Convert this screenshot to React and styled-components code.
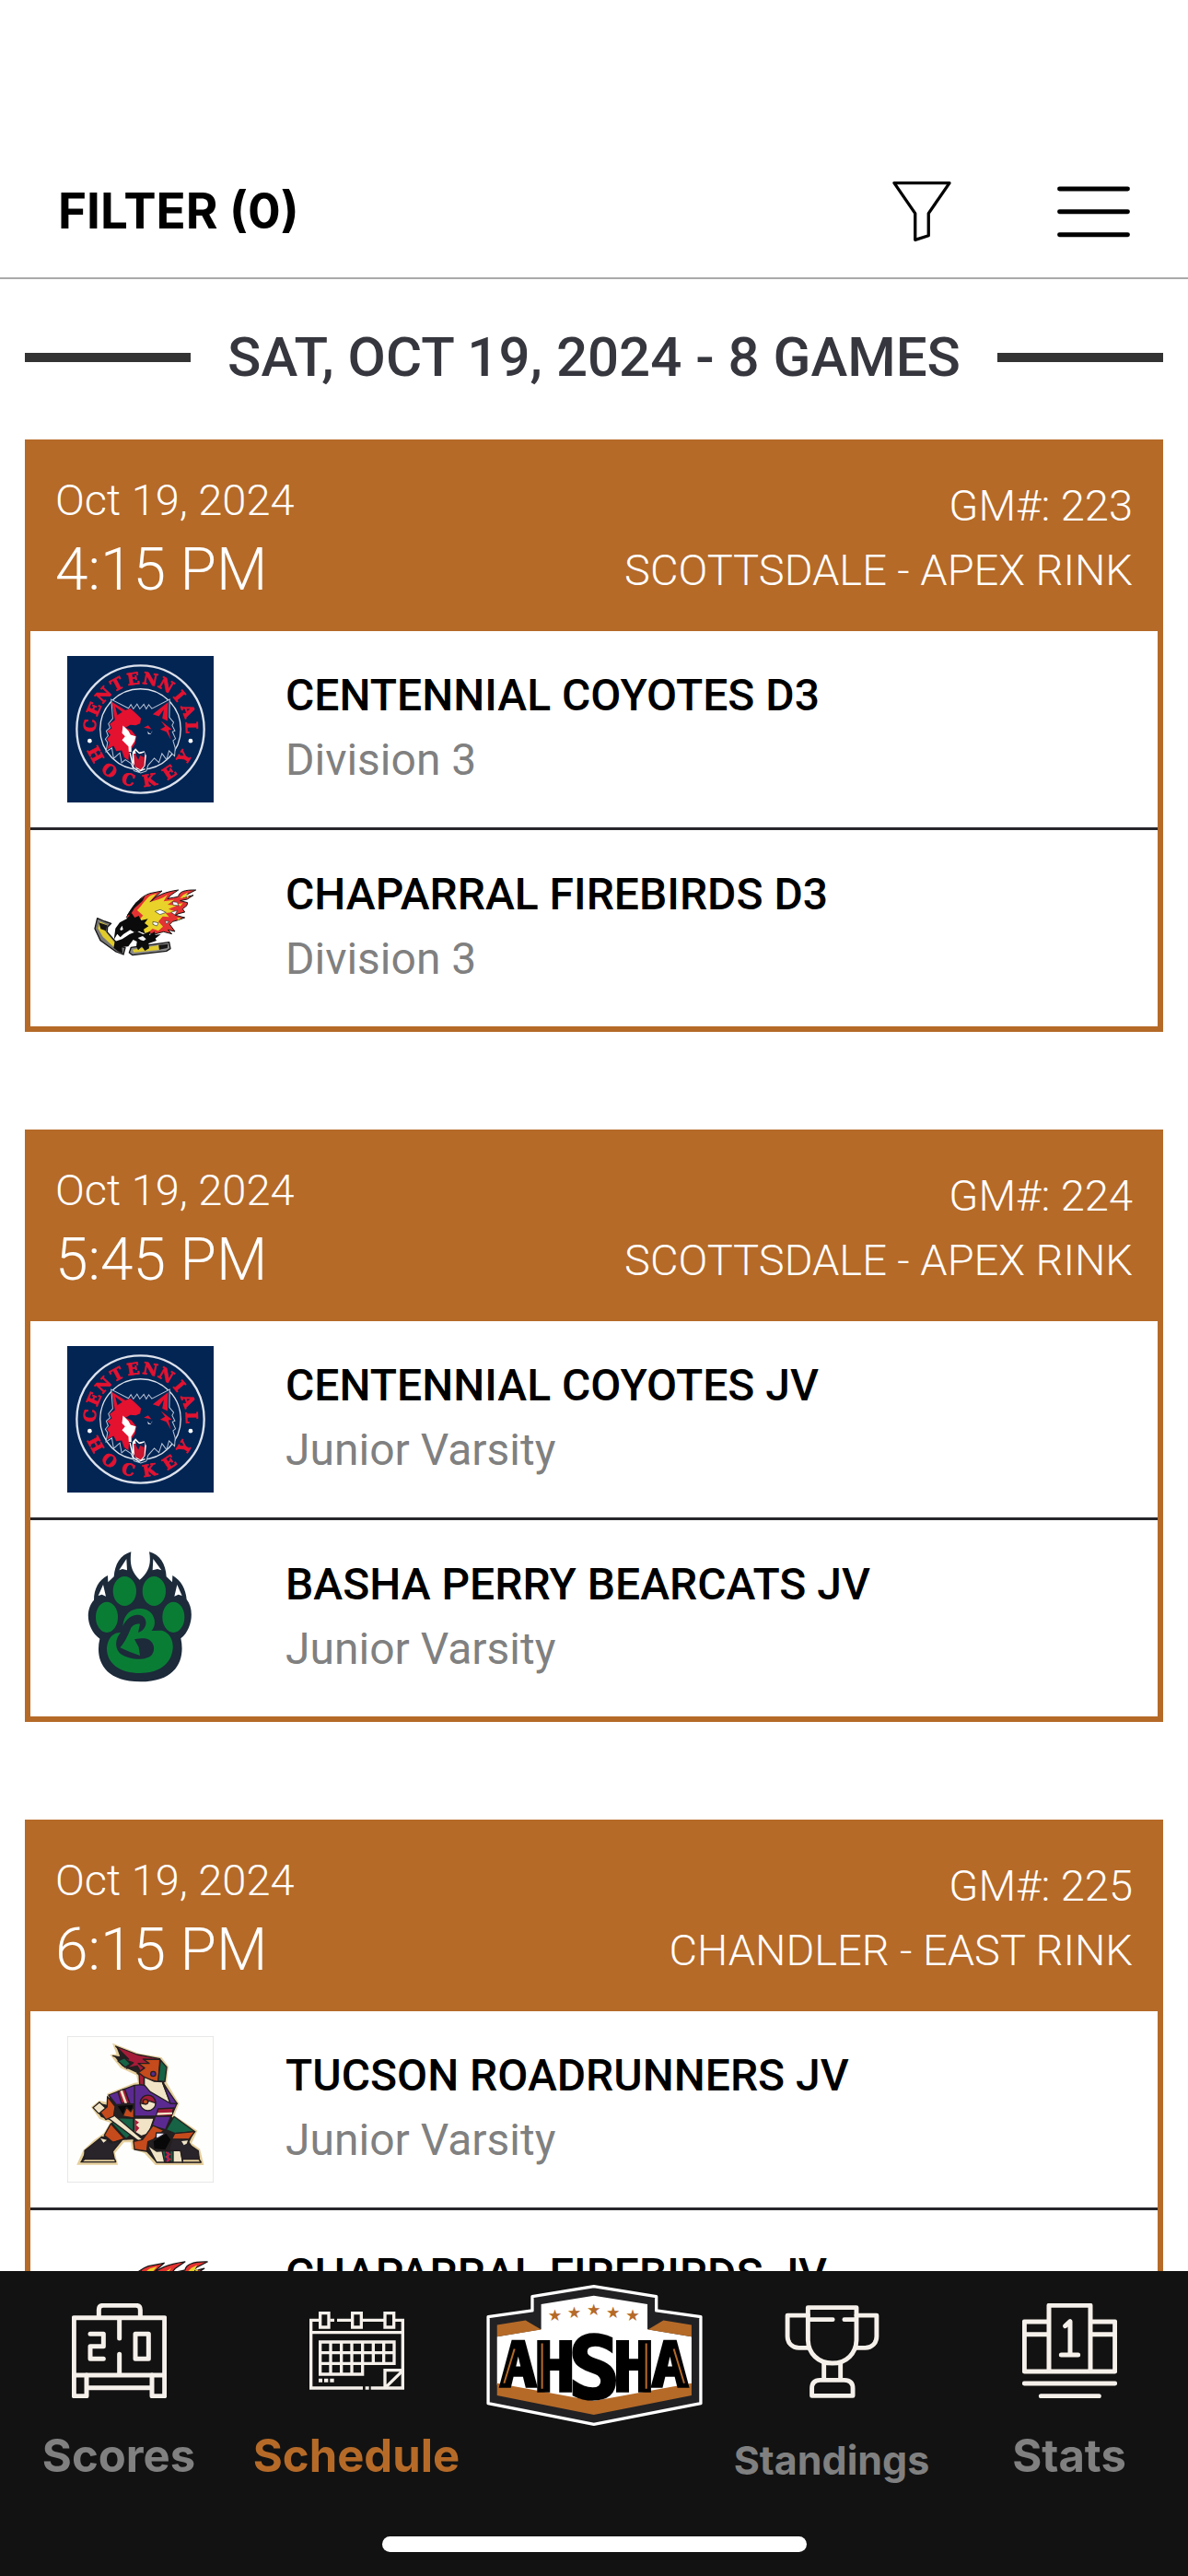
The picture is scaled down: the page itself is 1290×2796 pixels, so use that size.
import React from "react";
import styled, { createGlobalStyle } from "styled-components";

const orange = "#b56a28";
const cream = "#f5f0ea";

const games = [
  {
    id: 223,
    date: "Oct 19, 2024",
    time: "4:15 PM",
    rink: "SCOTTSDALE - APEX RINK",
    teams: [
      { name: "CENTENNIAL COYOTES D3", division: "Division 3", Logo: CoyotesLogo },
      { name: "CHAPARRAL FIREBIRDS D3", division: "Division 3", Logo: FirebirdsLogo },
    ],
  },
  {
    id: 224,
    date: "Oct 19, 2024",
    time: "5:45 PM",
    rink: "SCOTTSDALE - APEX RINK",
    teams: [
      { name: "CENTENNIAL COYOTES JV", division: "Junior Varsity", Logo: CoyotesLogo },
      { name: "BASHA PERRY BEARCATS JV", division: "Junior Varsity", Logo: BearcatsLogo },
    ],
  },
  {
    id: 225,
    date: "Oct 19, 2024",
    time: "6:15 PM",
    rink: "CHANDLER - EAST RINK",
    teams: [
      { name: "TUCSON ROADRUNNERS JV", division: "Junior Varsity", Logo: RoadrunnersLogo },
      { name: "CHAPARRAL FIREBIRDS JV", division: "Junior Varsity", Logo: FirebirdsLogo, large: true },
    ],
  },
];

function App() {
  return (
    <Screen>
      <GlobalStyle />
      <Header>
        <FilterButton type="button">FILTER (0)</FilterButton>
        <HeaderActions>
          <IconButton type="button" aria-label="Filter">
            <FunnelIcon />
          </IconButton>
          <IconButton type="button" aria-label="Menu">
            <MenuIcon />
          </IconButton>
        </HeaderActions>
      </Header>
      <Schedule>
        <DayHeading>
          <Rule />
          <DayTitle>SAT, OCT 19, 2024 - 8 GAMES</DayTitle>
          <Rule />
        </DayHeading>
        <GameList>
          {games.map((game) => (
            <GameCard key={game.id} game={game} />
          ))}
        </GameList>
      </Schedule>
      <TabBar>
        <Tabs>
          <Tab href="#scores">
            <ScoresIcon />
            <TabLabel>Scores</TabLabel>
          </Tab>
          <Tab href="#schedule" $active>
            <ScheduleIcon />
            <TabLabel>Schedule</TabLabel>
          </Tab>
          <HomeTab href="#home">
            <LeagueLogo />
          </HomeTab>
          <Tab href="#standings">
            <StandingsIcon />
            <TabLabel $small>Standings</TabLabel>
          </Tab>
          <Tab href="#stats">
            <StatsIcon />
            <TabLabel>Stats</TabLabel>
          </Tab>
        </Tabs>
        <HomeIndicator />
      </TabBar>
    </Screen>
  );
}

function GameCard({ game }) {
  return (
    <Card>
      <CardHeader>
        <When>
          <SmallText>{game.date}</SmallText>
          <Time>{game.time}</Time>
        </When>
        <Where>
          <SmallText>GM#: {game.id}</SmallText>
          <SmallText>{game.rink}</SmallText>
        </Where>
      </CardHeader>
      {game.teams.map(({ name, division, Logo, large }) => (
        <TeamRow key={name}>
          <Logo large={large} />
          <TeamText>
            <TeamName>{name}</TeamName>
            <Division>{division}</Division>
          </TeamText>
        </TeamRow>
      ))}
    </Card>
  );
}

/* header icons */

function FunnelIcon() {
  return (
    <svg width="64" height="66" viewBox="207 104 194 200" fill="none" stroke="#000" strokeWidth="10" strokeLinejoin="round">
      <path d="M213 112H395L326 212V285L282 299V212Z" />
    </svg>
  );
}

function MenuIcon() {
  return (
    <svg width="79" height="57" viewBox="744 126 237 172" stroke="#000" strokeWidth="15" strokeLinecap="round">
      <path d="M751 138H974M751 213H974M751 288H974" />
    </svg>
  );
}

/* team logos */

function ArcLetters({ word, from, to, radius, flip }) {
  const step = (to - from) / (word.length - 1);
  return word.split("").map((letter, i) => (
    <text
      key={i}
      x="277"
      y={flip ? 275 + radius : 275 - radius}
      transform={`rotate(${from + step * i} 277 275)`}
    >
      {letter}
    </text>
  ));
}

function CoyotesLogo() {
  return (
    <TeamLogo viewBox="39 37 476 476">
      <rect x="39" y="37" width="476" height="476" fill="#022554" />
      <g fill="none" stroke="#dde2ec">
        <circle cx="277" cy="275" r="207" strokeWidth="7" />
        <circle cx="277" cy="275" r="131" strokeWidth="4" />
      </g>
      <g
        fill="#e4112f"
        stroke="#e4112f"
        strokeWidth="2"
        fontFamily='"DejaVu Serif", serif'
        fontWeight="bold"
        fontSize="53"
        textAnchor="middle"
      >
        <ArcLetters word="CENTENNIAL" from={-86} to={88} radius={147} />
        <ArcLetters word="HOCKEY" from={61} to={-57} radius={187} flip />
      </g>
      <circle cx="112" cy="313" r="7" fill="#fff" />
      <circle cx="440" cy="313" r="7" fill="#fff" />
      <path
        d="M182 178L238 207L246 195L254 209L266 193L275 209L288 194L296 209L304 195L314 208L372 178L371 236L385 253L380 262L389 280L381 283L391 306L383 312L390 336L388 362L370 345L362 374L347 354L337 383L322 369L302 392L296 411L278 417L256 410L246 386L228 374L216 384L210 352L190 370L184 336L165 348L170 318L163 307L172 296L166 281L178 270L173 257L187 240Z"
        fill="#022554"
        stroke="#b9c4d6"
        strokeWidth="3"
      />
      <path
        d="M184 186L228 214L244 207L263 224L279 240L276 256L262 262L244 261L229 270L248 279L264 299L259 323L240 350L238 376L224 366L216 344L198 346L190 329L168 341L176 319L168 307L180 294L169 281L184 272L177 258L194 245Z"
        fill="#e4112f"
      />
      <path d="M195 201L218 219L200 233ZM367 187L317 226L337 233L353 211L348 240L365 248Z" fill="#e4112f" />
      <path d="M195 202L218 219L202 229Z" fill="#022554" />
      <path d="M343 247L379 276L368 278L376 309L361 283L341 276L357 267ZM288 270L302 262L313 275Z" fill="#e4112f" />
      <path d="M220 263L238 280L245 293L262 298L258 314L247 331L248 349L239 348L238 331L217 310L227 298L217 288Z" fill="#fff" />
      <path d="M300 281C307 294 316 289 315 280L311 291L302 291Z" fill="#fff" />
      <path d="M251 348L261 337L273 350L290 346L296 361L292 394L280 410L264 404L250 380Z" fill="#fff" />
      <path d="M255 354H292L289 394L278 407L258 396Z" fill="#c9152f" />
      <path d="M260 344L274 356L292 349L289 366L276 360L270 374L263 360Z" fill="#022554" />
      <path d="M243 352L254 400L272 412L292 404" fill="none" stroke="#fff" strokeWidth="4" />
    </TeamLogo>
  );
}

function FirebirdsLogo({ large }) {
  return (
    <TeamLogo viewBox={large ? "41 10 373 373" : "-21 -36 477 477"}>
      <g strokeLinejoin="round">
        <path
          d="M172 167C190 133 213 101 248 89L288 81L262 104L248 119C270 94 300 84 341 78L316 95L306 107C321 101 330 104 341 99C344 84 360 77 398 78L371 92L357 103L390 95L370 108L347 113L371 119L369 128L355 140L362 150L342 155L331 160L362 168L337 177L322 181L313 190L330 213L307 208L320 221L293 214L263 222L220 214L195 190Z"
          fill="#e43332"
          stroke="#161616"
          strokeWidth="3"
        />
        <path
          d="M207 144C224 126 236 104 252 95L270 90L246 118C266 111 287 109 306 93L293 115L327 110L306 126L337 128L309 140L334 149L299 153L311 166L290 164L276 181L291 197L276 211L257 204L240 219L222 215L232 187L214 174L226 161Z"
          fill="#e9d229"
        />
        <path d="M357 94L372 86L364 102L346 105ZM367 100L375 97L372 104ZM339 124L356 121L347 131ZM337 169L350 170L340 176Z" fill="#e9d229" />
        <path
          d="M265 148L282 142L301 151L281 158ZM322 116L337 118L342 129L324 127ZM258 181L276 185L271 195L258 190ZM317 151L338 144L330 159ZM297 178L311 181L302 188Z"
          fill="#fff"
          stroke="#333"
          strokeWidth="2"
        />
        <path d="M174 160L202 119L232 98L224 114L198 137L184 160Z" fill="#111" />
        <path d="M77 170L101 180L122 187L110 199L109 215L151 262L168 266L162 288L138 279L87 242L69 204Z" fill="#777" stroke="#151515" strokeWidth="4" />
        <path d="M85 181L108 191L101 210L145 263L136 269L95 230L79 203Z" fill="#e0cb2b" />
        <path d="M82 184L109 193L105 211L88 205Z" fill="#151515" />
        <path d="M187 265L311 248L315 269L302 277L192 290L181 282Z" fill="#888" stroke="#151515" strokeWidth="4" />
        <path d="M192 272L277 258L278 273L196 281Z" fill="#e0cb2b" />
        <path d="M277 257L307 254L305 267L279 272Z" fill="#151515" />
        <path
          d="M131 240L136 203L150 184L174 171L188 152L199 168L212 162L220 177L242 172L231 186L244 196L228 206L232 220L213 212L198 216L184 208L162 222L152 232L142 221Z"
          fill="#0b0b0b"
        />
        <path
          d="M134 246L158 238L182 222L206 212L226 222L250 212L246 226L263 213L266 224L284 222L266 236L270 243L244 252L246 268L232 276L222 262L210 274L204 262L206 246L194 240L178 262L157 264L159 284L143 277L130 266Z"
          fill="#0b0b0b"
        />
        <path d="M151 205L158 194L161 207L153 210Z" fill="#fff" />
        <path d="M209 234L225 228L236 238L228 244L218 241Z" fill="#eee" />
      </g>
    </TeamLogo>
  );
}

function BearcatsLogo() {
  return (
    <TeamLogo viewBox="-21 21 477 477">
      <path
        d="M187 43C183 76 185 106 215 134C243 111 254 84 246 43C281 52 300 83 302 124L321 142L322 120C350 136 365 164 368 198C394 229 387 296 349 325C363 386 342 466 217 466C92 466 70 388 85 326C45 297 34 236 66 200C66 164 82 134 111 120L112 142L131 124C135 82 151 54 187 43Z"
        fill="#1c2a3a"
      />
      <path d="M172 66L148 103L159 99L174 103ZM259 66L286 103L273 99L257 103ZM96 150L80 186L92 182L105 188ZM337 150L328 188L341 182L353 186Z" fill="#fff" />
      <g fill="#0a7d35">
        <ellipse cx="166" cy="171" rx="38" ry="48" />
        <ellipse cx="262" cy="171" rx="38" ry="48" />
        <ellipse cx="108" cy="256" rx="36" ry="50" />
        <ellipse cx="325" cy="256" rx="36" ry="50" />
        <path d="M160 286C163 244 188 226 221 228C253 230 270 259 262 286C256 301 246 310 235 315C249 298 237 300 262 300L286 299C309 303 325 327 323 358C318 410 277 438 216 438C151 438 107 407 108 355C111 325 128 305 153 306C132 330 134 363 157 378C184 395 237 399 255 378C267 359 261 337 242 328C232 323 220 325 198 328L212 354L216 381L183 369L151 355C169 335 179 309 187 290C195 278 209 276 216 278L210 306C235 300 245 267 224 252C199 241 172 258 160 286Z" />
      </g>
    </TeamLogo>
  );
}

function RoadrunnersLogo() {
  return (
    <TeamLogo viewBox="39 30 477 477">
      <rect x="40" y="31" width="475" height="475" fill="#fefefd" stroke="#e4e4e4" strokeWidth="3" />
      <path
        d="M193 60L270 90L344 103L365 130L359 182L399 250L383 290L458 340L439 380L468 401L479 446H328L292 407L253 395L250 371L222 372L190 410L199 445H76L95 403L130 371L160 350L185 310L147 297L122 262L144 244L170 250L173 220L259 186L274 184L268 155L215 130L186 94L205 92Z"
        fill="#241f20"
        stroke="#e5cf9c"
        strokeWidth="8"
      />
      <g stroke="#241f20" strokeWidth="4" strokeLinejoin="round">
        <path d="M174 222L258 190V250L199 253ZM258 190L285 188L396 250L378 291H258Z" fill="#5b2a91" />
        <path d="M204 211L226 202L243 249H216Z" fill="#a51c38" />
        <path d="M200 256L254 252L258 297L225 296Z" fill="#080808" />
        <path d="M220 291L232 262L246 276L256 258V297Z" fill="#c54a1c" />
        <path d="M197 63L267 90L341 104L313 122L334 118L300 144L288 132L281 151L267 127L232 135L254 117L188 94L239 105Z" fill="#a51c38" />
        <path d="M204 111L226 101L245 120L228 132Z" fill="#166346" />
        <path d="M286 105L341 106L336 180L290 166L267 151L291 134L270 119L306 119Z" fill="#c54a1c" />
        <path d="M343 108L363 131L357 178L335 176Z" fill="#166346" />
        <path d="M273 150L289 163V190L275 187Z" fill="#a51c38" />
        <circle cx="319" cy="153" r="8" fill="#5b2a91" />
        <path d="M290 163L321 177L349 179L375 249L309 211L290 189Z" fill="#f1e4c6" />
        <path d="M350 182L397 250L375 249Z" fill="#5b2a91" />
        <circle cx="302" cy="248" r="25" fill="#f1e4c6" />
        <path d="M277 248C278 214 326 214 327 248L306 241L288 251Z" fill="#a51c38" />
        <circle cx="294" cy="244" r="8" fill="#c54a1c" />
        <path d="M335 267L386 264L378 290L329 291Z" fill="#a51c38" />
        <path d="M326 291H377L359 335L315 322Z" fill="#5b2a91" />
        <path d="M258 297H322L304 348L280 356L258 342Z" fill="#f1e4c6" />
        <path d="M260 302L273 311L263 319L274 329L261 344Z" fill="#a51c38" stroke="none" />
        <path d="M202 296L255 298V343L231 365L184 314Z" fill="#166346" />
        <path d="M123 263L144 245L164 264L294 374L330 441H415L409 403L373 402L330 405L299 384L283 380L151 281L140 281Z" fill="#f1e4c6" />
        <path d="M170 227L195 259L190 291L165 302L147 278L169 260Z" fill="#c54a1c" />
        <path d="M181 315L225 364L188 376L160 353Z" fill="#c54a1c" />
        <path d="M387 292L455 341L390 347L361 335Z" fill="#166346" />
        <path d="M379 366L389 347L455 341L436 366Z" fill="#c54a1c" />
        <path d="M318 321L354 337L320 366L302 374L298 405L258 399L255 373L284 367Z" fill="#c54a1c" />
        <path d="M329 345H355V363H328Z" fill="#eee8ff" />
        <path d="M318 372L362 345L378 367L359 402L321 398Z" fill="#080808" />
        <path d="M152 358L182 378L214 370L187 405L193 433H96V403Z" fill="#29242a" />
        <path d="M370 402L381 367L429 367L443 388L466 404L469 433H414L408 403Z" fill="#29242a" />
        <path d="M84 440L96 431H194L197 440ZM415 431H468L475 441H415Z" fill="#e5cf9c" />
        <path d="M348 404H384V440H356Z" fill="#166346" />
        <path d="M360 405H374V440H360Z" fill="#5b2a91" />
      </g>
      <path d="M211 209L219 206L234 248H226ZM333 280L381 278V284L331 287ZM147 363L168 368L157 377ZM411 372L432 370L428 380L419 385Z" fill="#f1e4c6" />
      <path d="M360 408L373 415L361 423L374 431L363 438" fill="none" stroke="#c32338" strokeWidth="5" />
    </TeamLogo>
  );
}

/* tab bar icons */

function ScoresIcon() {
  return (
    <TabIcon viewBox="234 180 309 309" strokeWidth="15">
      <path d="M241 227H536V414H241ZM322 227V201Q322 187 336 187H443Q457 187 457 201V227M389 227V294M389 346V414" />
      <path d="M294 280H337V320H294V361H337M441 280H484V361H441ZM241 414V482H282V414M495 414V482H536V414M282 455H495" />
    </TabIcon>
  );
}

function ScheduleIcon() {
  return (
    <TabIcon viewBox="1008 180 309 309" strokeWidth="10" strokeLinecap="butt" strokeLinejoin="miter">
      <path d="M1043 235H1013V456H1182M1190 456H1202M1208 456H1312V235H1283M1013 275H1312M1075 235H1089M1098 235H1148M1177 235H1254" />
      <path d="M1043 212H1071V258H1043ZM1148 212H1177V258H1148ZM1254 212H1283V258H1254Z" />
      <path d="M1043 306H1284V376H1181V411H1043ZM1043 341H1284M1043 376H1181M1077 306V411M1112 306V411M1146 306V411M1181 306V376M1216 306V376M1250 306V376" />
      <path d="M1254 456V398H1312M1259 451L1308 403" />
      <path d="M1038 431H1050M1056 431H1069M1075 431H1088" strokeWidth="12" />
    </TabIcon>
  );
}

function StandingsIcon() {
  return (
    <TabIcon viewBox="215 183 310 315" strokeWidth="15">
      <path d="M290 197H451V302C451 350 417 382 371 382C325 382 290 350 290 302Z" />
      <path d="M290 223H222V293C222 315 238 331 260 331H290M451 223H518V293C518 315 502 331 480 331H451M297 237H372M411 237H444" />
      <path d="M343 382V438M398 382V438M303 490V466Q303 438 330 438H411Q439 438 439 466V490Z" />
    </TabIcon>
  );
}

function StatsIcon() {
  return (
    <TabIcon viewBox="990 180 309 309" strokeWidth="15">
      <path d="M1077 402V187H1212V402M1077 240H997V402H1292V240H1212M997 281H1077M1212 281H1292" />
      <path d="M1130 254L1146 239V347M1117 348H1172M997 441H1292M1051 482H1240" />
    </TabIcon>
  );
}

function LeagueLogo() {
  return (
    <svg width="235" height="153" viewBox="53 59 704 460">
      <path
        d="M403 64L607 97V143L752 163V446L403 514L58 446V163L202 143V97Z"
        fill="#212124"
        stroke="#fff"
        strokeWidth="10"
        strokeLinejoin="round"
      />
      <path d="M231 122L403 94L578 122V204L722 228V385L403 445L87 385V228L231 204Z" fill="#fff" />
      <path d="M87 190L180 175L231 205L87 228ZM722 190L630 175L580 205L722 228Z" fill={orange} />
      <path d="M87 380L403 438L722 380V420L403 483L87 420Z" fill={orange} />
      <g fill={orange} fontFamily='"DejaVu Sans", sans-serif' fontSize="52" textAnchor="middle">
        <text x="276" y="176">★</text>
        <text x="339" y="166">★</text>
        <text x="403" y="157">★</text>
        <text x="466" y="166">★</text>
        <text x="530" y="176">★</text>
      </g>
      <g
        fill="#000"
        stroke="#000"
        strokeWidth="10"
        fontFamily='"DejaVu Sans Mono", monospace'
        fontWeight="bold"
        textAnchor="middle"
      >
        <text x="156" y="390" fontSize="200">A</text>
        <text x="275" y="404" fontSize="222">H</text>
        <text x="404" y="430" fontSize="278">S</text>
        <text x="533" y="404" fontSize="222">H</text>
        <text x="652" y="390" fontSize="200">A</text>
      </g>
      <path d="M234 250V398M574 250V398M110 380L144 268M698 380L664 268" fill="none" stroke={orange} strokeWidth="6" />
    </svg>
  );
}

const GlobalStyle = createGlobalStyle`
  * {
    box-sizing: border-box;
  }
  body {
    margin: 0;
    background: #fff;
    font-family: Roboto, "Liberation Sans", sans-serif;
  }
`;
const Screen = styled.div`
  display: flex;
  flex-direction: column;
  height: 100vh;
  overflow: hidden;
`;
const Header = styled.header`
  display: flex;
  justify-content: space-between;
  align-items: center;
  flex-shrink: 0;
  padding: 196px 63px 39px;
  border-bottom: 2px solid #aaaaaa;
`;
const FilterButton = styled.button`
  padding: 0;
  border: none;
  background: none;
  font: 700 53px/66px Inter, sans-serif;
  color: #000;
`;
const HeaderActions = styled.div`
  display: flex;
  align-items: center;
  gap: 115px;
`;
const IconButton = styled.button`
  display: flex;
  padding: 0;
  border: none;
  background: none;
`;
const Schedule = styled.main`
  flex: 1;
  min-height: 0;
  padding: 0 27px;
  overflow-y: auto;
  scrollbar-width: none;
`;
const DayHeading = styled.div`
  display: flex;
  align-items: center;
  gap: 40px;
  padding: 50px 0 54px;
`;
const Rule = styled.span`
  flex: 1;
  height: 10px;
  background: #333333;
`;
const DayTitle = styled.h1`
  margin: 0;
  font-size: 60px;
  font-weight: 500;
  line-height: 70px;
  color: #36363e;
`;
const GameList = styled.div`
  display: flex;
  flex-direction: column;
  gap: 106px;
`;
const Card = styled.article`
  border: 6px solid ${orange};
  background: #fff;
`;
const CardHeader = styled.div`
  display: flex;
  justify-content: space-between;
  align-items: center;
  height: 202px;
  padding: 0 27px;
  background: ${orange};
  color: #fff;
`;
const When = styled.div`
  display: flex;
  flex-direction: column;
`;
const Where = styled.div`
  display: flex;
  flex-direction: column;
  text-align: right;
`;
const SmallText = styled.span`
  font-size: 47px;
  font-weight: 300;
  line-height: 70px;
`;
const Time = styled.span`
  font-size: 64px;
  font-weight: 300;
  line-height: 82px;
`;
const TeamRow = styled.div`
  display: flex;
  align-items: center;
  gap: 78px;
  padding: 27px 40px;

  & + & {
    border-top: 3px solid #26262b;
  }
`;
const TeamLogo = styled.svg`
  width: 159px;
  height: 159px;
  flex-shrink: 0;
`;
const TeamText = styled.div`
  padding-bottom: 4px;
`;
const TeamName = styled.h2`
  margin: 0;
  font-size: 48px;
  font-weight: 500;
  line-height: 70px;
  color: #000;
`;
const Division = styled.p`
  margin: 0;
  font-size: 48px;
  line-height: 70px;
  color: #808080;
`;
const TabBar = styled.nav`
  display: flex;
  flex-direction: column;
  align-items: center;
  flex-shrink: 0;
  padding-bottom: 26px;
  background: #121212;
`;
const Tabs = styled.div`
  display: grid;
  grid-template-columns: repeat(5, 1fr);
  width: 100%;
  height: 288px;
`;
const Tab = styled.a`
  display: flex;
  flex-direction: column;
  align-items: center;
  gap: 33px;
  padding-top: 35px;
  color: ${(props) => (props.$active ? orange : "#808080")};
  text-decoration: none;
`;
const HomeTab = styled.a`
  display: flex;
  justify-content: center;
  padding-top: 15px;
`;
const TabIcon = styled.svg.attrs((props) => ({
  fill: "none",
  stroke: cream,
  strokeLinecap: props.strokeLinecap || "round",
  strokeLinejoin: props.strokeLinejoin || "round",
}))`
  width: 103px;
  height: 103px;
`;
const TabLabel = styled.span`
  font-family: Inter, sans-serif;
  font-size: ${(props) => (props.$small ? "43px" : "49px")};
  font-weight: 700;
  line-height: ${(props) => (props.$small ? "68px" : "60px")};
`;
const HomeIndicator = styled.div`
  width: 461px;
  height: 17px;
  border-radius: 9px;
  background: #fff;
`;

export default App;
